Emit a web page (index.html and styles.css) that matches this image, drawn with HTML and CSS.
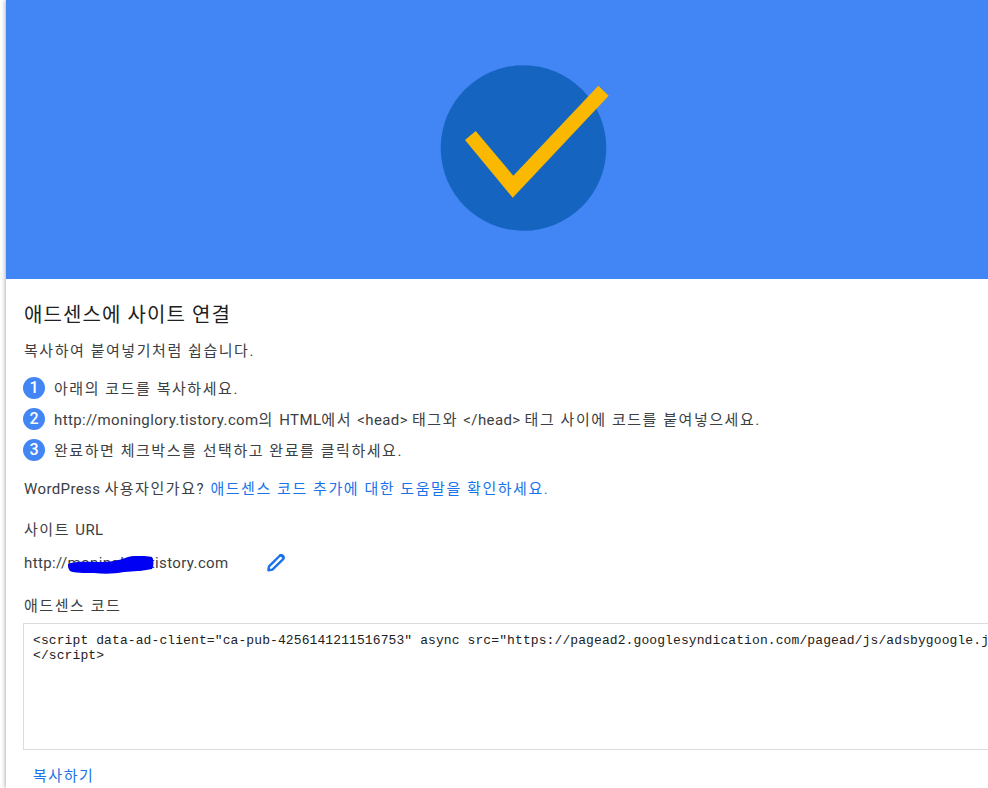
FILE: index.html
```html
<!DOCTYPE html>
<html lang="ko">
<head>
<meta charset="utf-8">
<title>애드센스에 사이트 연결</title>
<link rel="stylesheet" href="styles.css">
</head>
<body>
<main class="panel">
  <header class="hero">
    <svg class="hero-icon" width="170" height="170" viewBox="0 0 170 170" aria-hidden="true">
      <circle cx="83.5" cy="83" r="82.8" fill="#1565c0"/>
      <polygon fill="#fbb800" points="25,75 35.7,66 73.3,110.7 158.3,20.7 168.7,30.7 72.7,132.7"/>
    </svg>
  </header>
  <section class="content">
    <h1 class="title">애드센스에 사이트 연결</h1>
    <p class="lead ko">복사하여 붙여넣기처럼 쉽습니다.</p>
    <ol class="steps">
      <li class="step"><span class="badge">1</span><span class="ko">아래의 코드를 복사하세요.</span></li>
      <li class="step"><span class="badge">2</span><span>http://moninglory.tistory.com<span class="ko">의 </span>HTML<span class="ko">에서 </span>&lt;head&gt; <span class="ko">태그와 </span>&lt;/head&gt; <span class="ko">태그 사이에 코드를 붙여넣으세요.</span></span></li>
      <li class="step"><span class="badge">3</span><span class="ko">완료하면 체크박스를 선택하고 완료를 클릭하세요.</span></li>
    </ol>
    <p class="wp">WordPress <span class="ko">사용자인가요? </span><a class="link ko" href="#">애드센스 코드 추가에 대한 도움말을 확인하세요.</a></p>
    <h2 class="label"><span class="ko">사이트 </span>URL</h2>
    <div class="url-row">
      <span class="url">http://moninglory.tistory.com
        <svg class="scribble" width="86" height="18" viewBox="0 0 86 18" aria-hidden="true">
          <path fill="#0000f5" d="M0 8 C8 5 18 6 30 6 C42 6 50 5 60 1 C68 -1 80 0 84 1 C86 5 86 9 84 13 C74 15 66 15 56 16 C46 18 36 18 26 17 C16 17 6 17 2 15 C0 13 0 10 0 8 Z"/>
        </svg>
      </span>
      <svg class="edit" width="20" height="20" viewBox="0 0 20 20" aria-hidden="true">
        <path fill="none" stroke="#1a73e8" stroke-width="2.4" stroke-linejoin="round" d="M2.4 17.2 L3 13.4 L13.5 3 Q15 1.8 16.4 2.8 L17.2 3.6 Q18.2 5 16.9 6.4 L6.4 16.6 Z"/>
        <path fill="#1a73e8" d="M13 1.8 Q15 0.4 17.4 1.8 L18.4 3 Q19.4 5 18 6.8 Z"/>
      </svg>
    </div>
    <h2 class="label code-label ko">애드센스 코드</h2>
    <pre class="code">&lt;script data-ad-client="ca-pub-4256141211516753" async src="https://pagead2.googlesyndication.com/pagead/js/adsbygoogle.js"&gt;
&lt;/script&gt;</pre>
    <a class="copy ko" href="#">복사하기</a>
  </section>
</main>
</body>
</html>
```
FILE: styles.css
```css
html, body {
  margin: 0;
  height: 100%;
  overflow: hidden;
  background: #fff;
}
body {
  font-family: Roboto, "Noto Sans CJK KR", sans-serif;
  color: #3c4043;
}
.panel {
  width: 1038px;
  margin-left: 6px;
  box-shadow: -1px 0 4px rgba(0, 0, 0, 0.3);
  background: #fff;
  min-height: 788px;
}
.hero {
  height: 279px;
  background: #4285f4;
  display: flex;
  justify-content: center;
  padding-top: 65px;
  box-sizing: border-box;
}
.hero-icon {
  display: block;
}
.content {
  padding: 22px 18px 0;
  font-size: 15px;
  letter-spacing: 0.38px;
}
.ko {
  letter-spacing: 1.55px;
}
.title {
  margin: 0;
  font-size: 20px;
  font-weight: 400;
  line-height: 28px;
  color: #212121;
  letter-spacing: 1.1px;
}
.lead {
  margin: 12px 0 0;
  line-height: 20px;
}
.steps {
  list-style: none;
  margin: 11px 0 0;
  padding: 0;
}
.step {
  display: flex;
  align-items: center;
  gap: 9px;
  height: 31px;
  margin-left: -1px;
}
.badge {
  width: 22px;
  height: 22px;
  border-radius: 50%;
  background: #4285f4;
  color: #fff;
  font-size: 16px;
  font-weight: 500;
  letter-spacing: 0;
  display: flex;
  align-items: center;
  justify-content: center;
  flex: none;
}
.wp {
  margin: 14px 0 0;
  line-height: 20px;
}
.link {
  color: #1a73e8;
  text-decoration: none;
}
.label {
  margin: 21px 0 0;
  font-size: 15px;
  font-weight: 400;
  line-height: 20px;
}
.url-row {
  display: flex;
  align-items: center;
  gap: 37px;
  margin-top: 13px;
  height: 20px;
}
.url {
  position: relative;
  line-height: 20px;
}
.scribble {
  position: absolute;
  left: 44px;
  top: 3px;
}
.edit {
  display: block;
}
.code-label {
  margin-top: 23px;
}
.code {
  margin: 7px 0 0 -1px;
  height: 127px;
  box-sizing: border-box;
  border: 1px solid #dadce0;
  padding: 9px;
  font-family: "Liberation Mono", monospace;
  font-size: 13px;
  line-height: 15px;
  letter-spacing: 0.1px;
  color: #212121;
  overflow: hidden;
  white-space: pre;
}
.copy {
  display: inline-block;
  margin: 16px 0 0 9px;
  color: #1a73e8;
  text-decoration: none;
  line-height: 20px;
}
```
